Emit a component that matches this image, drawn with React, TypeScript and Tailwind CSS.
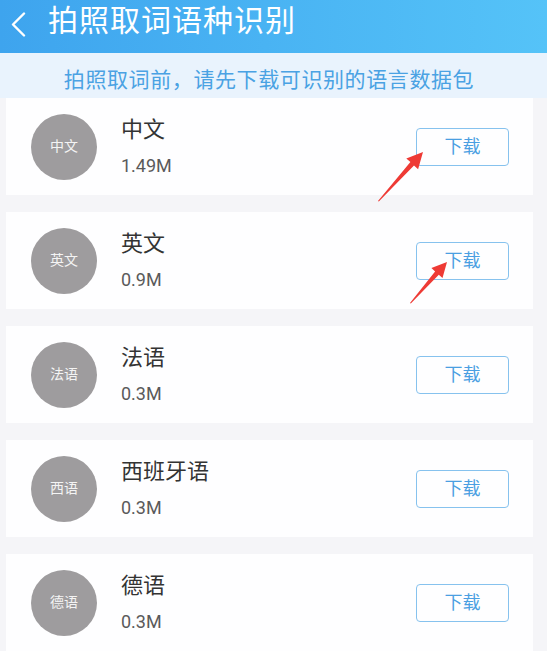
import React from "react";

const items = [
  { name: "中文", size: "1.49M" },
  { name: "英文", size: "0.9M" },
  { name: "法语", size: "0.3M" },
  { name: "西班牙语", size: "0.3M" },
  { name: "德语", size: "0.3M" },
];

const abbr = (n: string) => (n === "西班牙语" ? "西语" : n);

export default function App() {
  return (
    <div
      className="relative w-[547px] h-[651px] overflow-hidden bg-[#f5f5f8]"
      style={{ fontFamily: 'Roboto, "Noto Sans CJK SC", sans-serif' }}
    >
      <div className="flex h-[53px] items-start bg-gradient-to-r from-[#3ea4ee] to-[#55c3f8]">
        <svg className="ml-[10px] mt-[12px]" width="18" height="25" viewBox="0 0 18 25">
          <path d="M14 1.5 L3 12.5 L14 23.5" fill="none" stroke="#ffffff" strokeWidth="2.4" strokeLinecap="round" strokeLinejoin="round" />
        </svg>
        <div className="ml-[20px] mt-[1px] text-[30px] leading-[40px] tracking-[1px] text-white">拍照取词语种识别</div>
      </div>
      <div className="h-[45px] bg-[#e9f3fd] pr-[9px] pt-[13px] text-center text-[21px] leading-[28px] tracking-[0.6px] text-[#4aa2e3]">
        拍照取词前，请先下载可识别的语言数据包
      </div>
      <div className="flex flex-col gap-[17px] pl-[6px] pr-[14px]">
        {items.map((it) => (
          <div key={it.name} className="flex h-[97px] shrink-0 items-center bg-[#fefeff] pl-[25px] pr-[24px]">
            <div className="flex h-[66px] w-[66px] shrink-0 items-center justify-center rounded-full bg-[#9e9c9e] text-[14px] text-[#f4f4f4]">
              {abbr(it.name)}
            </div>
            <div className="ml-[24px] flex flex-1 flex-col gap-[10px]">
              <div className="text-[22px] leading-[28px] text-[#333333]">{it.name}</div>
              <div className="text-[18px] leading-[24px] text-[#5a5a5a]">{it.size}</div>
            </div>
            <div className="flex h-[38px] w-[93px] items-center justify-center rounded-[4px] border border-[#86c2ee] text-[18px] text-[#4a9fe2]">
              下载
            </div>
          </div>
        ))}
      </div>
      <svg className="pointer-events-none absolute left-0 top-0" width="547" height="651">
        <polygon
          fill="#ee3a35"
          points="378,201 410.4,162.1 406.3,158.4 423,152 418.1,169.2 414,165.5 378.8,201.5"
        />
        <polygon
          fill="#ee3a35"
          points="410,303 435.1,271.4 431.4,268.1 447,262 442.5,278.1 438.8,274.8 410.8,303.5"
        />
      </svg>
    </div>
  );
}
